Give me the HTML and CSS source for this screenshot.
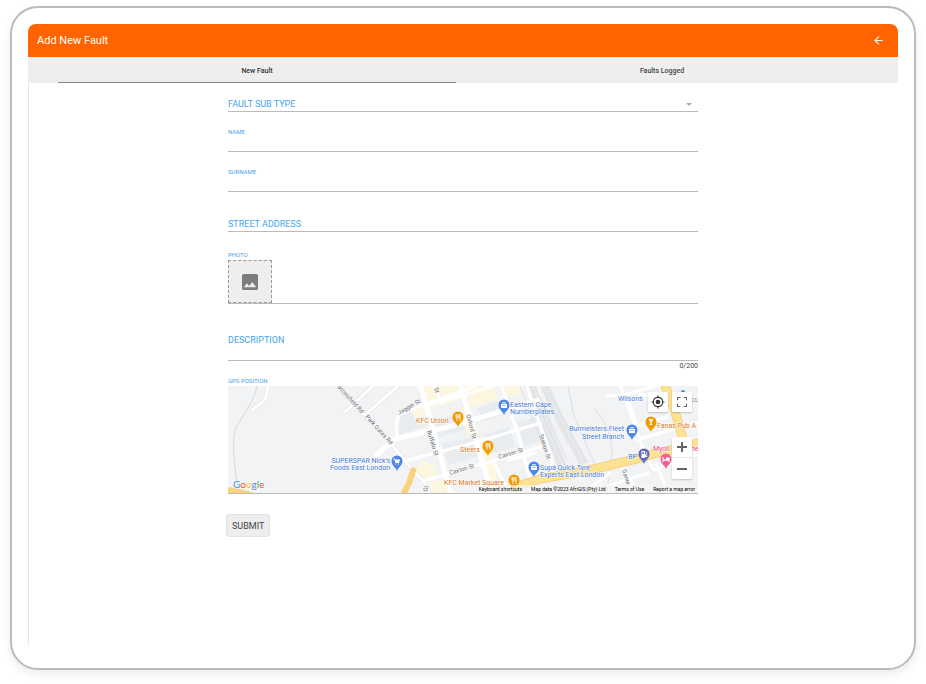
FILE: index.html
```
<!DOCTYPE html>
<html lang="en">
<head>
    <meta charset="UTF-8">
    <meta name="viewport" content="width=device-width, initial-scale=1.0">
    <title>Add New Fault</title>
    <link rel="stylesheet" href="styles.css">
</head>
<body>
    <div class="device">
        <header class="app-bar">
            <h1>Add New Fault</h1>
            <button type="button" class="back" aria-label="Back">
                <svg viewBox="0 0 24 24" width="13" height="13"><path fill="#fff" d="M20 11H7.83l5.59-5.59L12 4l-8 8 8 8 1.41-1.41L7.83 13H20z"/></svg>
            </button>
        </header>
        <main class="screen">
            <nav class="tabs">
                <div class="tab"><a class="active" href="#new">New Fault</a></div>
                <div class="tab"><a href="#logged">Faults Logged</a></div>
            </nav>
            <form class="fault-form" id="new">
                <div class="field inline">
                    <label for="subType">FAULT SUB TYPE</label>
                    <select id="subType"><option value=""></option></select>
                    <svg class="caret" viewBox="0 0 6 3" width="6" height="3"><path fill="#aaa" d="M0 0h6L3 3z"/></svg>
                </div>
                <div class="field">
                    <label for="name">NAME</label>
                    <input type="text" id="name">
                </div>
                <div class="field">
                    <label for="surname">SURNAME</label>
                    <input type="text" id="surname">
                </div>
                <div class="field inline">
                    <label for="street">STREET ADDRESS</label>
                    <input type="text" id="street">
                </div>
                <div class="photo">
                    <label for="photo">PHOTO</label>
                    <button type="button" id="photo">
                        <svg viewBox="3 3 18 18" width="16" height="16"><path fill="#7c7c7c" d="M21 19V5c0-1.100-.9-2-2-2H5c-1.100 0-2 .9-2 2v14c0 1.100.9 2 2 2h14c1.100 0 2-.9 2-2zM8.500 13.500l2.500 3.010L14.500 12l4.500 6H5l3.500-4.500z"/></svg>
                    </button>
                </div>
                <div class="field description">
                    <label for="description">DESCRIPTION</label>
                    <textarea id="description" maxlength="200"></textarea>
                </div>
                <div class="counter">0/200</div>
                <div class="gps">
                    <span class="small-label">GPS POSITION</span>
                    <div class="map">
                        <svg class="map-tiles" viewBox="0 0 470 107" preserveAspectRatio="xMidYMid slice">
                            <rect width="470" height="107" fill="#f1f3f4"/>
                            <!-- blocks -->
                            <g fill="#e9ecef">
                                <path d="M172 30l20-8 7 18-28 9zM203 36l30-9 7 16-31 9zM214 58l32-8 7 20-33 9zM250 22l24-8 5 14-25 8zM256 49l25-8 6 20-25 7zM290 36l22-6v26l-16 4z"/>
                            </g>
                            <g fill="#fef7e0">
                                <path d="M194 0h38l4 12-35 11zM182 24l12-4 6 17-9 2zM237 0h28l5 13-30 9zM231 27l12-3 8 24-10 2zM246 53l11-3 8 22-12 3zM253 79l12-3 9 30h-10zM277 0h16l2 7-16 4zM186 83l10-8 10 5 3 10-14 4zM202 97l14-4 3 13h-17zM307 4h6v22l-4 1z"/>
                            </g>
                            <!-- railway -->
                            <g fill="none" stroke="#dddfe2" stroke-width="1">
                                <path stroke-width="9" stroke="#e6e8ea" d="M302 0l16 38 17 44"/>
                                <path stroke-width="9" stroke="#e6e8ea" d="M317 0l14 32 25 46"/>
                                <path d="M292 0l16 42 24 48M340 0l6 30 26 60M366 22q18 20 18 45l-5 40"/>
                                <path d="M297 0l37 84M302 0l35 80M307 0l32 74M313 0l42 80M318 0l40 76"/>
                            </g>
                            <g fill="none" stroke="#d5d8db" stroke-width="1">
                                <path d="M29 0C25 22 7 36 6 50s0 30 4 50"/>
                            </g>
                            <!-- streets -->
                            <g fill="none" stroke="#dcdfe2" stroke-width="4" stroke-linecap="round" stroke-linejoin="round">
                                <path d="M40 0c-1 8-2 14-6 17s-8 4-10 7M117 26l28-26M139 27l31-27M107-2l50 52 20 25 10 12 10 9v12"/>
                            </g>
                            <g fill="none" stroke="#fff" stroke-width="3" stroke-linecap="round" stroke-linejoin="round">
                                <path d="M40 0c-1 8-2 14-6 17s-8 4-10 7M117 26l28-26M139 27l31-27M107-2l50 52 20 25 10 12 10 9v12"/>
                                <path d="M169 54l-1-18 4-8 22-9 52-18M195 20l38-10 43-14M205-2l9 19M177 75l72-19 63-19M195 95l56-16 61-18M273-2l17 50 16 60M265 74l16 34M281 74l26-7M298-2l24 70 5 20M186 84l-5 12"/>
                                <path d="M379 10l20-2 36-10M392-2l20 56 6 16M399 10l10 30 30-9M408 54l32-9 30-8M392 78l18 28M418 70l8 14 44-16M380 100l40-13M460 56l10 12M356 107l26-20M412 8l20 4M428 78l12 28"/>
                            </g>
                            <g fill="none" stroke="#fff" stroke-width="5" stroke-linejoin="round">
                                <path d="M147 70l20-17 53-12 92-27M192-2l14 48 17 63M232-2l14 50 18 60"/>
                            </g>
                            <!-- main roads -->
                            <g fill="none" stroke-linejoin="round">
                                <path stroke="#f2c262" stroke-width="9" d="M436-3l10 25 11 38M284 102l28-9 50-9 50-12 13-4 47-11"/>
                                <path stroke="#fde293" stroke-width="8" d="M436-3l10 25 11 38M284 102l28-9 50-9 50-12 13-4 47-11"/>
                                <path stroke="#f8d27e" stroke-width="6" d="M175 109l6-12 5-15"/>
                            </g>
                            <path fill="#f8d27e" d="M0 101l12 2 15 4H0z"/>
                            <!-- street names -->
                            <g class="street">
                                <text transform="translate(109 1) rotate(48)">aconsfield Rd</text>
                                <text transform="translate(137 31) rotate(48)">Park Gates Rd</text>
                                <text transform="translate(171 29) rotate(-30)">Jagger St</text>
                                <text transform="translate(206 2) rotate(73)">St</text>
                                <text transform="translate(199 45) rotate(73)">Buffalo St</text>
                                <text transform="translate(238 29) rotate(74)">Oxford St</text>
                                <text transform="translate(222 89) rotate(-17)">Caxton St</text>
                                <text transform="translate(271 73) rotate(-17)">Caxton St</text>
                                <text transform="translate(311 49) rotate(72)">Station St</text>
                                <text transform="translate(394 84) rotate(73)">Gante</text>
                                <text transform="translate(199 106) rotate(-73)">Gl</text>
                                <text x="463" y="16">CU</text>
                            </g>
                            <!-- places -->
                            <g class="place food">
                                <text x="188" y="37">KFC Union</text>
                                <text x="232" y="66">Steers</text>
                                <text x="216" y="99">KFC Market Square</text>
                                <text x="429" y="42">Fanas Pub A</text>
                            </g>
                            <g class="place shop">
                                <text x="282" y="21">Eastern Cape</text>
                                <text x="282" y="28">Numberplates</text>
                                <text x="390" y="15">Wilsons</text>
                                <text x="396" y="45" text-anchor="end">Burmeisters Fleet</text>
                                <text x="396" y="53" text-anchor="end">Street Branch</text>
                                <text x="162" y="77" text-anchor="end">SUPERSPAR Nick's</text>
                                <text x="162" y="84" text-anchor="end">Foods East London</text>
                                <text x="312" y="84">Supa Quick Tyre</text>
                                <text x="312" y="91">Experts East London</text>
                                <text x="409" y="73" text-anchor="end">BP</text>
                            </g>
                            <g class="place hotel"><text x="425" y="65">Myoli</text><text x="463" y="65">he</text></g>
                            <defs>
                                <path id="pin" d="M0 9C-1 5-5.500 4-5.500-1a5.500 5.500 0 0 1 11 0C5.500 4 1 5 0 9z"/>
                                <path id="fork" d="M-2-4v3q0 1 1 1v3M-1-4v3M0-4v3q0 1-1 1M2 3v-7q-1 1-1 4h1" fill="none" stroke="#fff" stroke-width=".8"/>
                                <path id="bag" fill="#fff" fill-rule="evenodd" d="M-3-2h1.500v-2h3v2H3v4h-6zM-.8-2H.8v-1.200H-.8zM-2 0h4v-.6h-4z"/>
                            </defs>
                            <g fill="#f29900">
                                <g transform="translate(230 32)"><use href="#pin"/><use href="#fork"/></g>
                                <g transform="translate(260 61)"><use href="#pin"/><use href="#fork"/></g>
                                <g transform="translate(286 95)"><use href="#pin"/><use href="#fork"/></g>
                                <g transform="translate(423 37)"><use href="#pin"/><path fill="#fff" d="M-2.500-4h5L.6-1v2l1.400 1h-4l1.400-1v-2z"/></g>
                            </g>
                            <g fill="#4f86ec">
                                <g transform="translate(276 20)"><use href="#pin"/><use href="#bag"/></g>
                                <g transform="translate(306 82)"><use href="#pin"/><use href="#bag"/></g>
                                <g transform="translate(404 45)"><use href="#pin"/><use href="#bag"/></g>
                                <g transform="translate(169 76)"><use href="#pin"/><path fill="#fff" d="M-3.500-3.500h1.500l.5 1H3L2 1h-3.500l-1-3.500h-1zM-1.500 1.500h1v1h-1zM1 1.500h1v1H1z"/></g>
                                <path d="M453 6a2 2 0 0 1 4 0z"/>
                            </g>
                            <g transform="translate(416 69)" fill="#5c6bc0"><use href="#pin"/><path fill="#fff" fill-rule="evenodd" d="M-2.500-4H1v3l1 .5V1h.5v-3l-1-1 .5-.5 1.200 1.200V2H1V3h-3.500zM-1.500-3v2H0v-2z"/></g>
                            <g transform="translate(438 74)" fill="#f06292"><use href="#pin"/><path fill="#fff" d="M-3.500-3h1v2.500H0v-2h3.500V2h-1V.8h-5V2h-1z"/></g>
                            <text class="google" x="5" y="102"><tspan fill="#4285f4">G</tspan><tspan fill="#ea4335">o</tspan><tspan fill="#fbbc05">o</tspan><tspan fill="#4285f4">g</tspan><tspan fill="#34a853">l</tspan><tspan fill="#ea4335">e</tspan></text>
                        </svg>
                        <div class="map-top">
                            <button type="button" aria-label="My location">
                                <svg viewBox="0 0 24 24" width="14" height="14"><path fill="#333" d="M12 8a4 4 0 1 0 0 8 4 4 0 0 0 0-8zm8.940 3A9 9 0 0 0 13 3.060V1h-2v2.060A9 9 0 0 0 3.060 11H1v2h2.060A9 9 0 0 0 11 20.940V23h2v-2.060A9 9 0 0 0 20.940 13H23v-2zM12 19a7 7 0 1 1 0-14 7 7 0 0 1 0 14z"/></svg>
                            </button>
                            <button type="button" aria-label="Full screen">
                                <svg viewBox="0 0 18 18" width="10" height="10"><path fill="#666" d="M0 0v6h2V2h4V0zm16 0h-4v2h4v4h2V0zm0 16h-4v2h6v-6h-2zM2 12H0v6h6v-2H2z"/></svg>
                            </button>
                        </div>
                        <div class="map-zoom">
                            <button type="button" aria-label="Zoom in"><svg viewBox="0 0 10 10" width="10" height="10"><path fill="#666" d="M4 0h2v4h4v2H6v4H4V6H0V4h4z"/></svg></button>
                            <button type="button" aria-label="Zoom out"><svg viewBox="0 0 10 10" width="10" height="10"><path fill="#666" d="M0 4h10v2H0z"/></svg></button>
                        </div>
                        <div class="map-footer">
                            <button type="button">Keyboard shortcuts</button>
                            <span>Map data ©2023 AfriGIS (Pty) Ltd</span>
                            <a href="#terms">Terms of Use</a>
                            <a href="#report">Report a map error</a>
                        </div>
                    </div>
                </div>
                <button type="submit" class="submit">SUBMIT</button>
            </form>
        </main>
    </div>
</body>
</html>
```
FILE: styles.css
```
* {
    box-sizing: border-box;
}
body {
    margin: 0;
    font-family: Roboto, "Liberation Sans", sans-serif;
    background: #fff;
    color: #444;
}
button, input, select, textarea {
    font: inherit;
    color: inherit;
}
button {
    padding: 0;
    border: none;
    background: none;
    cursor: pointer;
}
a {
    color: inherit;
    text-decoration: none;
}
svg {
    display: block;
}
.device {
    display: flex;
    flex-direction: column;
    min-height: calc(100vh - 20px);
    margin: 6px 10px 14px;
    padding: 16px 16px 22px;
    border: 2px solid #bbb;
    border-radius: 28px;
    box-shadow: 0 4px 10px rgba(0, 0, 0, 0.08);
}
.app-bar {
    display: flex;
    align-items: center;
    justify-content: space-between;
    height: 33px;
    padding: 0 13px 0 9px;
    border-radius: 8px 8px 0 0;
    background: #ff6400;
    color: #fff;
}
.app-bar h1 {
    margin: 0;
    font-size: 11px;
    font-weight: 400;
}
.screen {
    flex: 1;
    box-shadow: inset 1px 0 #e8e8e8;
}
.tabs {
    display: flex;
    height: 26px;
    padding: 0 30px;
    background: #eee;
}
.tab {
    flex: 1;
    padding-right: 7px;
}
.tab a {
    display: block;
    height: 26px;
    line-height: 28px;
    text-align: center;
    font-size: 7px;
    font-weight: 500;
}
.tab .active {
    border-bottom: 1px solid #85858d;
    color: #333;
}
.fault-form {
    max-width: 470px;
    margin: 0 auto;
    padding-top: 5px;
}
.field {
    display: grid;
    height: 24px;
    margin-bottom: 16px;
    border-bottom: 1px solid #bbb;
}
.field label, .field input, .field select, .field textarea, .caret {
    grid-area: 1 / 1;
}
.field input, .field select, .field textarea {
    width: 100%;
    height: 100%;
    padding: 8px 0 0;
    border: none;
    outline: none;
    background: transparent;
    font-size: 9px;
    appearance: none;
    resize: none;
}
.field label, .photo label, .small-label {
    display: block;
    height: 10px;
    line-height: 10px;
    font-size: 6px;
    color: #45a5e8;
}
.field label {
    line-height: 8px;
}
.inline label, .description label {
    height: 14px;
    line-height: 14px;
    font-size: 9px;
}
.inline label {
    align-self: end;
}
.caret {
    align-self: end;
    justify-self: end;
    margin: 0 6px 5px;
}
.photo {
    margin-top: 18px;
    border-bottom: 1px solid #bbb;
}
.photo button {
    display: flex;
    align-items: center;
    justify-content: center;
    width: 44px;
    height: 43px;
    border: 1px dashed #999;
    background: #eee;
}
.description {
    height: 28px;
    margin: 29px 0 0;
}
.counter {
    height: 10px;
    line-height: 10px;
    text-align: right;
    font-size: 7px;
}
.gps {
    margin-top: 5px;
}
.map {
    position: relative;
    height: 108px;
    border-bottom: 1px solid #bbb;
    overflow: hidden;
}
.map-tiles {
    width: 100%;
    height: 107px;
}
.street {
    font-size: 6px;
    fill: #5f6368;
    stroke: #fff;
    stroke-width: 1px;
    paint-order: stroke;
}
.place {
    font-size: 7px;
    stroke: #fff;
    stroke-width: 1px;
    paint-order: stroke;
}
.food {
    fill: #d9771e;
}
.shop {
    fill: #3f78d8;
}
.hotel {
    fill: #e8457c;
}
.google {
    font-family: Lato, sans-serif;
    font-size: 10px;
    stroke: #fff;
    stroke-width: 1px;
    paint-order: stroke;
}
.map-top, .map-zoom {
    position: absolute;
    right: 6px;
    display: flex;
}
.map-top {
    top: 6px;
    gap: 4px;
}
.map-zoom {
    top: 51px;
    flex-direction: column;
}
.map-top button, .map-zoom {
    border-radius: 1px;
    background: #fff;
    box-shadow: 0 1px 2px rgba(0, 0, 0, 0.2);
}
.map-top button, .map-zoom button {
    display: flex;
    align-items: center;
    justify-content: center;
    width: 20px;
    height: 20px;
}
.map-zoom button + button {
    height: 22px;
    border-top: 1px solid #e6e6e6;
}
.map-footer {
    position: absolute;
    right: 0;
    bottom: 0;
    display: flex;
    gap: 9px;
    padding: 0 3px;
    background: rgba(245, 245, 245, 0.7);
    line-height: 8px;
    font-size: 5px;
    color: #000;
}
.submit {
    display: block;
    height: 23px;
    margin: 20px 0 0 -2px;
    padding: 0 5px;
    border: 1px solid #e2e2e2;
    border-radius: 3px;
    background: #eee;
    font-size: 9px;
}
```
